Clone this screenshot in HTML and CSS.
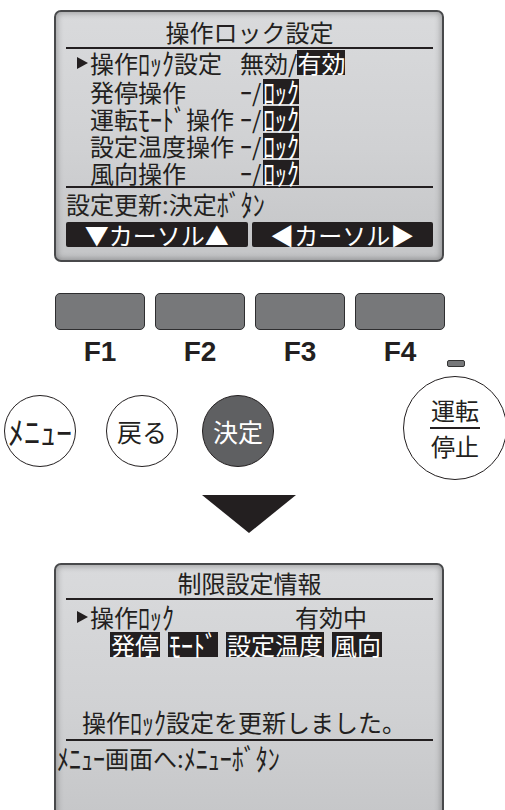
FILE: index.html
```html
<!DOCTYPE html>
<html>
<head>
    <meta charset="utf-8">
    <title>操作ロック設定</title>
    <link rel="stylesheet" href="styles.css">
</head>
<body>
    <div class="lcd lcd-top">
        <div class="lcd-title">操作ロック設定</div>
        <div class="menu">
            <div class="row first">
                <span class="cursor on"></span>
                <span class="label">操作<span class="hw">ﾛｯｸ</span>設定</span>
                <span class="val">無効/<span class="rev">有効</span></span>
            </div>
            <div class="row">
                <span class="cursor"></span>
                <span class="label">発停操作</span>
                <span class="val"><span class="sep">ｰ/</span><span class="rev"><span class="hw">ﾛｯｸ</span></span></span>
            </div>
            <div class="row">
                <span class="cursor"></span>
                <span class="label">運転<span class="hw">ﾓｰﾄﾞ</span>操作</span>
                <span class="val"><span class="sep">ｰ/</span><span class="rev"><span class="hw">ﾛｯｸ</span></span></span>
            </div>
            <div class="row">
                <span class="cursor"></span>
                <span class="label">設定温度操作</span>
                <span class="val"><span class="sep">ｰ/</span><span class="rev"><span class="hw">ﾛｯｸ</span></span></span>
            </div>
            <div class="row">
                <span class="cursor"></span>
                <span class="label">風向操作</span>
                <span class="val"><span class="sep">ｰ/</span><span class="rev"><span class="hw">ﾛｯｸ</span></span></span>
            </div>
        </div>
        <div class="lcd-foot">設定更新:決定<span class="hw">ﾎﾞﾀﾝ</span></div>
        <div class="softkeys">
            <div class="softkey">▼カーソル▲</div>
            <div class="softkey">◀カーソル▶</div>
        </div>
    </div>

    <div class="fkeys">
        <div class="fkey"></div>
        <div class="fkey"></div>
        <div class="fkey"></div>
        <div class="fkey"></div>
    </div>
    <div class="flabels">
        <div class="flabel">F1</div>
        <div class="flabel">F2</div>
        <div class="flabel">F3</div>
        <div class="flabel">F4</div>
        <div class="led"></div>
    </div>

    <div class="buttons">
        <div class="btn btn-menu"><span class="stretch">ﾒﾆｭｰ</span></div>
        <div class="btn btn-back">戻る</div>
        <div class="btn btn-ok">決定</div>
        <div class="btn btn-run">
            <span>運転</span>
            <span class="bar"></span>
            <span>停止</span>
        </div>
    </div>

    <div class="arrow"></div>

    <div class="lcd lcd-bottom">
        <div class="lcd-title">制限設定情報</div>
        <div class="row info">
            <span class="cursor on"></span>
            <span class="label wide">操作<span class="hw">ﾛｯｸ</span></span>
            <span class="val">有効中</span>
        </div>
        <div class="tags">
            <span class="rev">発停</span>
            <span class="rev"><span class="hw">ﾓｰﾄﾞ</span></span>
            <span class="rev">設定温度</span>
            <span class="rev">風向</span>
        </div>
        <div class="msg">操作<span class="hw">ﾛｯｸ</span>設定を更新しました。</div>
        <div class="lcd-foot back"><span class="hw">ﾒﾆｭｰ</span>画面へ:<span class="hw">ﾒﾆｭｰﾎﾞﾀﾝ</span></div>
    </div>
</body>
</html>
```

FILE: styles.css
```css
/* remote controller screens */
body {
    margin: 0;
    width: 505px;
    height: 810px;
    overflow: hidden;
    background: #fff;
    color: #231f20;
    font-family: "Noto Sans CJK JP", sans-serif;
}

.lcd {
    box-sizing: border-box;
    width: 390px;
    margin-left: 54px;
    padding: 0 9px 0 10px;
    border: 2px solid #48494b;
    border-radius: 7px;
    background: linear-gradient(180deg, #d9dadc 0%, #d0d1d3 55%, #c4c5c7 100%);
    box-shadow: inset 0 0 6px 1px rgba(0, 0, 0, 0.3);
    font-size: 24px;
}

.lcd-top {
    margin-top: 10px;
    height: 252px;
}

.lcd-bottom {
    margin-top: 30px;
    height: 270px;
}

.lcd-title {
    padding-top: 4px;
    line-height: 31px;
    text-align: center;
    border-bottom: 2px solid #231f20;
}

.lcd-bottom .lcd-title {
    padding-top: 2px;
}

.menu {
    border-bottom: 2px solid #231f20;
}

.row {
    display: flex;
    align-items: center;
    height: 27px;
    line-height: 27px;
    white-space: nowrap;
}

.row.first {
    margin-bottom: 2px;
}

.cursor {
    flex: none;
    width: 24px;
}

.cursor.on::before {
    content: "";
    display: block;
    width: 0;
    margin-left: 11px;
    border-left: 11px solid #231f20;
    border-top: 6px solid transparent;
    border-bottom: 6px solid transparent;
}

.label {
    flex: none;
    width: 150px;
}

.label.wide {
    width: 205px;
}

/* half-width kana on the LCD are drawn full height */
.hw {
    display: inline-block;
    transform: scaleY(1.22);
}

.rev {
    display: inline-block;
    height: 25px;
    line-height: 25px;
    background: #231f20;
    color: #fff;
}

.sep {
    display: inline-block;
    width: 23px;
}

.lcd-foot {
    line-height: 32px;
    white-space: nowrap;
}

.softkeys {
    display: flex;
    gap: 4px;
    margin-top: 2px;
}

.softkey {
    flex: 1;
    height: 25px;
    line-height: 25px;
    background: #231f20;
    color: #fff;
    text-align: center;
    border-radius: 2px;
}

/* function keys */
.fkeys {
    display: flex;
    gap: 10px;
    margin: 31px 0 0 55px;
}

.fkey {
    box-sizing: border-box;
    width: 90px;
    height: 37px;
    background: #77787a;
    border: 1.5px solid #2e2e30;
    border-radius: 5px;
}

.flabels {
    display: flex;
    gap: 10px;
    height: 32px;
    margin: 6px 0 0 55px;
}

.flabel {
    width: 90px;
    text-align: center;
    font: bold 28px/32px "Liberation Sans", sans-serif;
}

.led {
    box-sizing: border-box;
    align-self: flex-end;
    width: 18px;
    height: 7px;
    margin: 0 0 1px -8px;
    background: #77787a;
    border: 1px solid #333;
    border-radius: 2px;
}

/* round buttons */
.buttons {
    display: flex;
    align-items: flex-start;
    height: 112px;
}

.btn {
    flex: none;
    box-sizing: border-box;
    display: flex;
    align-items: center;
    justify-content: center;
    width: 72px;
    height: 72px;
    margin-top: 27px;
    border: 1.5px solid #231f20;
    border-radius: 50%;
    background: #fff;
    font-size: 25px;
}

.btn-menu {
    margin-left: 4px;
}

.btn-menu .stretch {
    display: inline-block;
    transform: scale(1.28, 1.3);
}

.btn-back {
    margin-left: 30px;
}

.btn-ok {
    margin-left: 24px;
    background: #5f6062;
    color: #fff;
}

.btn-run {
    flex-direction: column;
    width: 104px;
    height: 104px;
    margin: 8px 0 0 129px;
    font-size: 24px;
    line-height: 26px;
}

.btn-run .bar {
    width: 50px;
    height: 1.5px;
    margin: 4px 0;
    background: #231f20;
}

.arrow {
    width: 0;
    height: 0;
    margin: 15px 0 0 202px;
    border-left: 47.5px solid transparent;
    border-right: 47.5px solid transparent;
    border-top: 38px solid #231f20;
}

/* info screen */
.info {
    height: 26px;
    line-height: 26px;
    margin-top: 4px;
}

.tags {
    display: flex;
    gap: 8px;
    margin-top: 2px;
    padding-left: 44px;
}

.tags .rev {
    padding: 0 1px;
}

.msg {
    height: 26px;
    line-height: 26px;
    margin-top: 52px;
    padding: 0 0 4px 16px;
    border-bottom: 2px solid #231f20;
    white-space: nowrap;
}

.lcd-foot.back {
    margin-left: -9px;
    line-height: 34px;
}
```
